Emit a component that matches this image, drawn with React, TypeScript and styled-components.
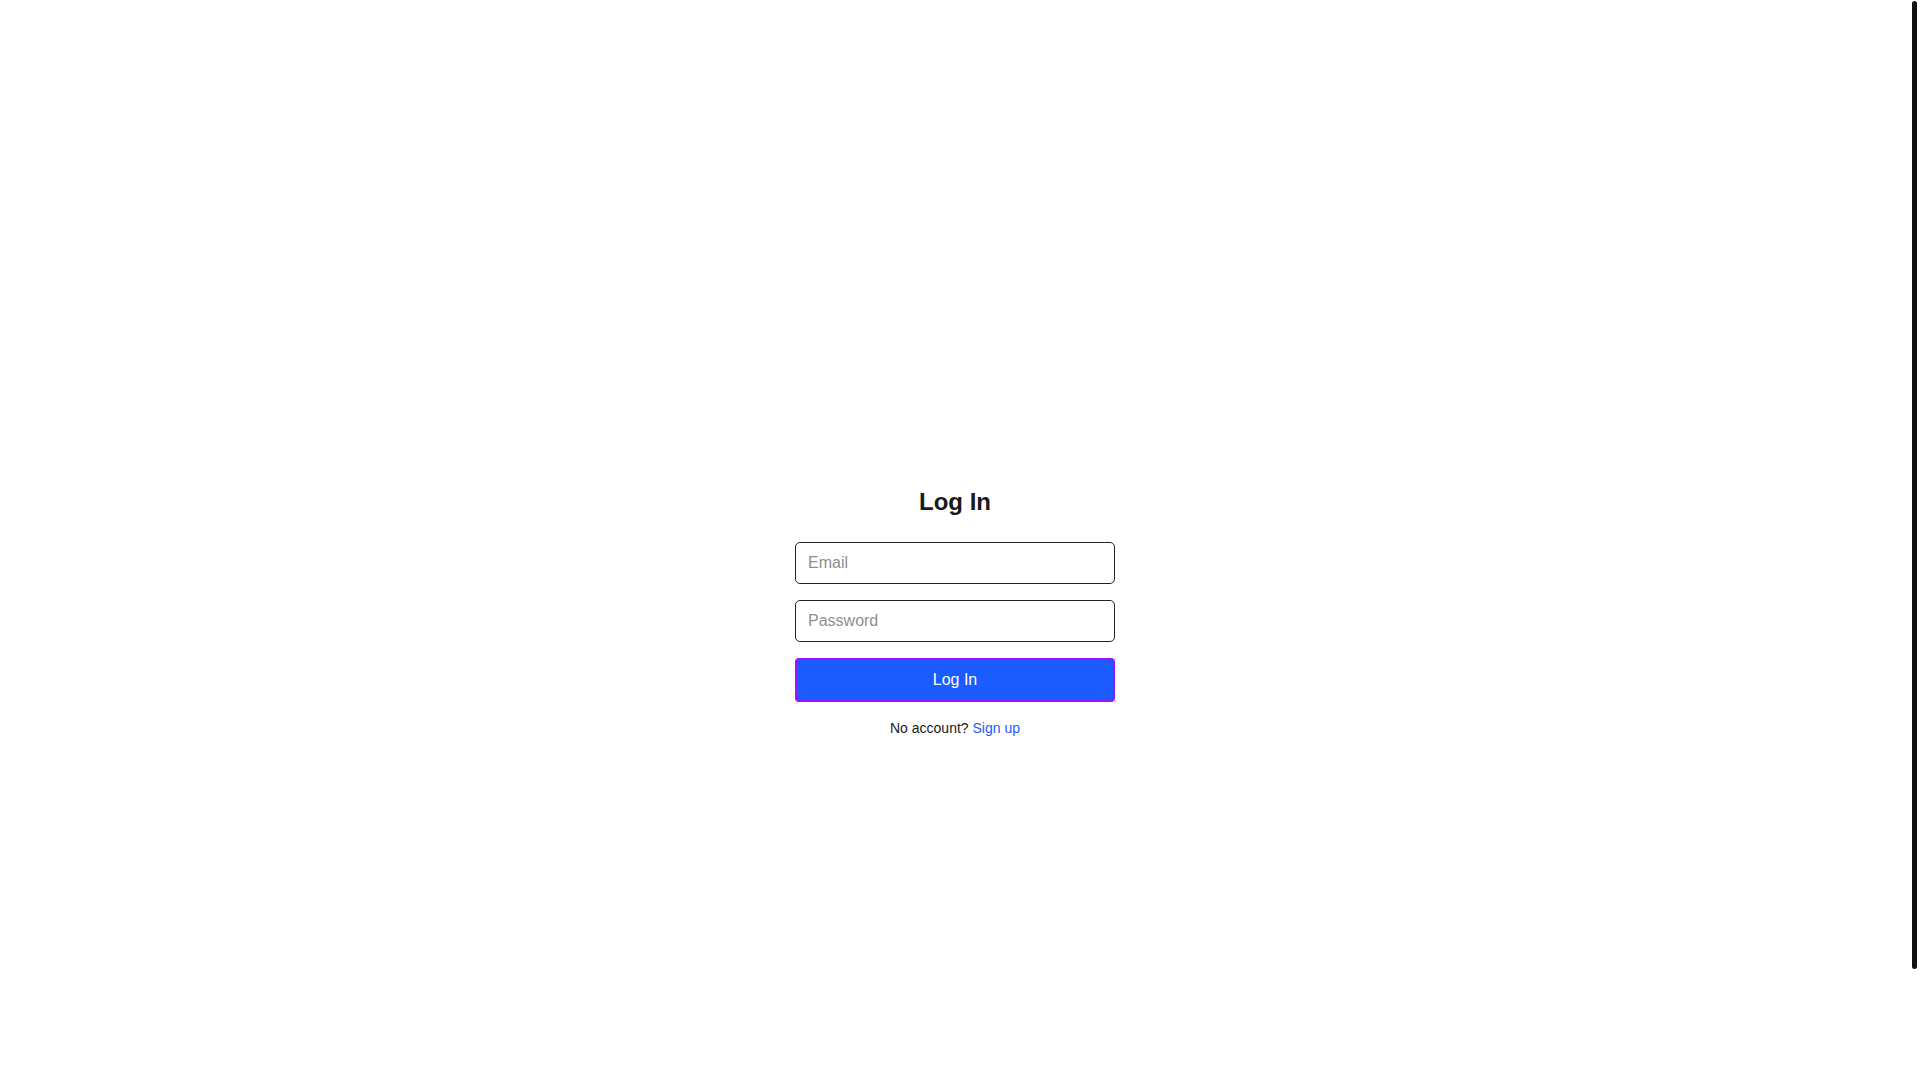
import styled, { createGlobalStyle } from "styled-components";

const GlobalStyle = createGlobalStyle`
	html, body {
		margin: 0;
		padding: 0;
		background: #ffffff;
		font-family: "Liberation Sans", Arial, sans-serif;
		color: #1a1a1a;
	}
	html {
		scrollbar-width: none;
	}
	::-webkit-scrollbar {
		display: none;
	}
`;

// the reference shows a thin scroll thumb over the right edge; the headless
// browser hides real scrollbars, so it is drawn as a fixed overlay
const ScrollThumb = styled.div`
	position: fixed;
	top: 1px;
	right: 3px;
	width: 5px;
	height: 968px;
	border-radius: 3px;
	background-color: #111111;
`;

const Page = styled.main`
	min-height: 100vh;
	padding: 73px 10px 52px 0;
	display: flex;
	align-items: center;
	justify-content: center;
`;

const Form = styled.form`
	width: 320px;
	display: flex;
	flex-direction: column;
	gap: 16px;
`;

const Title = styled.h1`
	margin: 0 0 10px;
	font-size: 24px;
	line-height: 28px;
	font-weight: 700;
	text-align: center;
	color: #1a1a1a;
`;

const Input = styled.input`
	box-sizing: border-box;
	width: 100%;
	height: 42px;
	padding: 0 12px;
	border: 1px solid #222222;
	border-radius: 5px;
	font-family: inherit;
	font-size: 16px;
	color: #1a1a1a;
	outline: none;
	&::placeholder {
		color: #8f8f8f;
	}
`;

const SubmitButton = styled.button`
	box-sizing: border-box;
	width: 100%;
	height: 44px;
	border: 2px solid #9d12ff;
	border-radius: 4px;
	background-color: #1a5cff;
	color: #ffffff;
	font-family: inherit;
	font-size: 16px;
	cursor: pointer;
`;

const Footer = styled.p`
	margin: 0;
	font-size: 14px;
	line-height: 21px;
	text-align: center;
	color: #1a1a1a;
`;

const SignUpLink = styled.a`
	color: #1a5cff;
	text-decoration: none;
`;

export default function App() {
	return (
		<>
			<GlobalStyle />
			<Page>
				<Form onSubmit={(e) => e.preventDefault()}>
					<Title>Log In</Title>
					<Input type="email" placeholder="Email" />
					<Input type="password" placeholder="Password" />
					<SubmitButton type="submit">Log In</SubmitButton>
					<Footer>
						No account? <SignUpLink href="#">Sign up</SignUpLink>
					</Footer>
				</Form>
			</Page>
			<ScrollThumb />
		</>
	);
}
